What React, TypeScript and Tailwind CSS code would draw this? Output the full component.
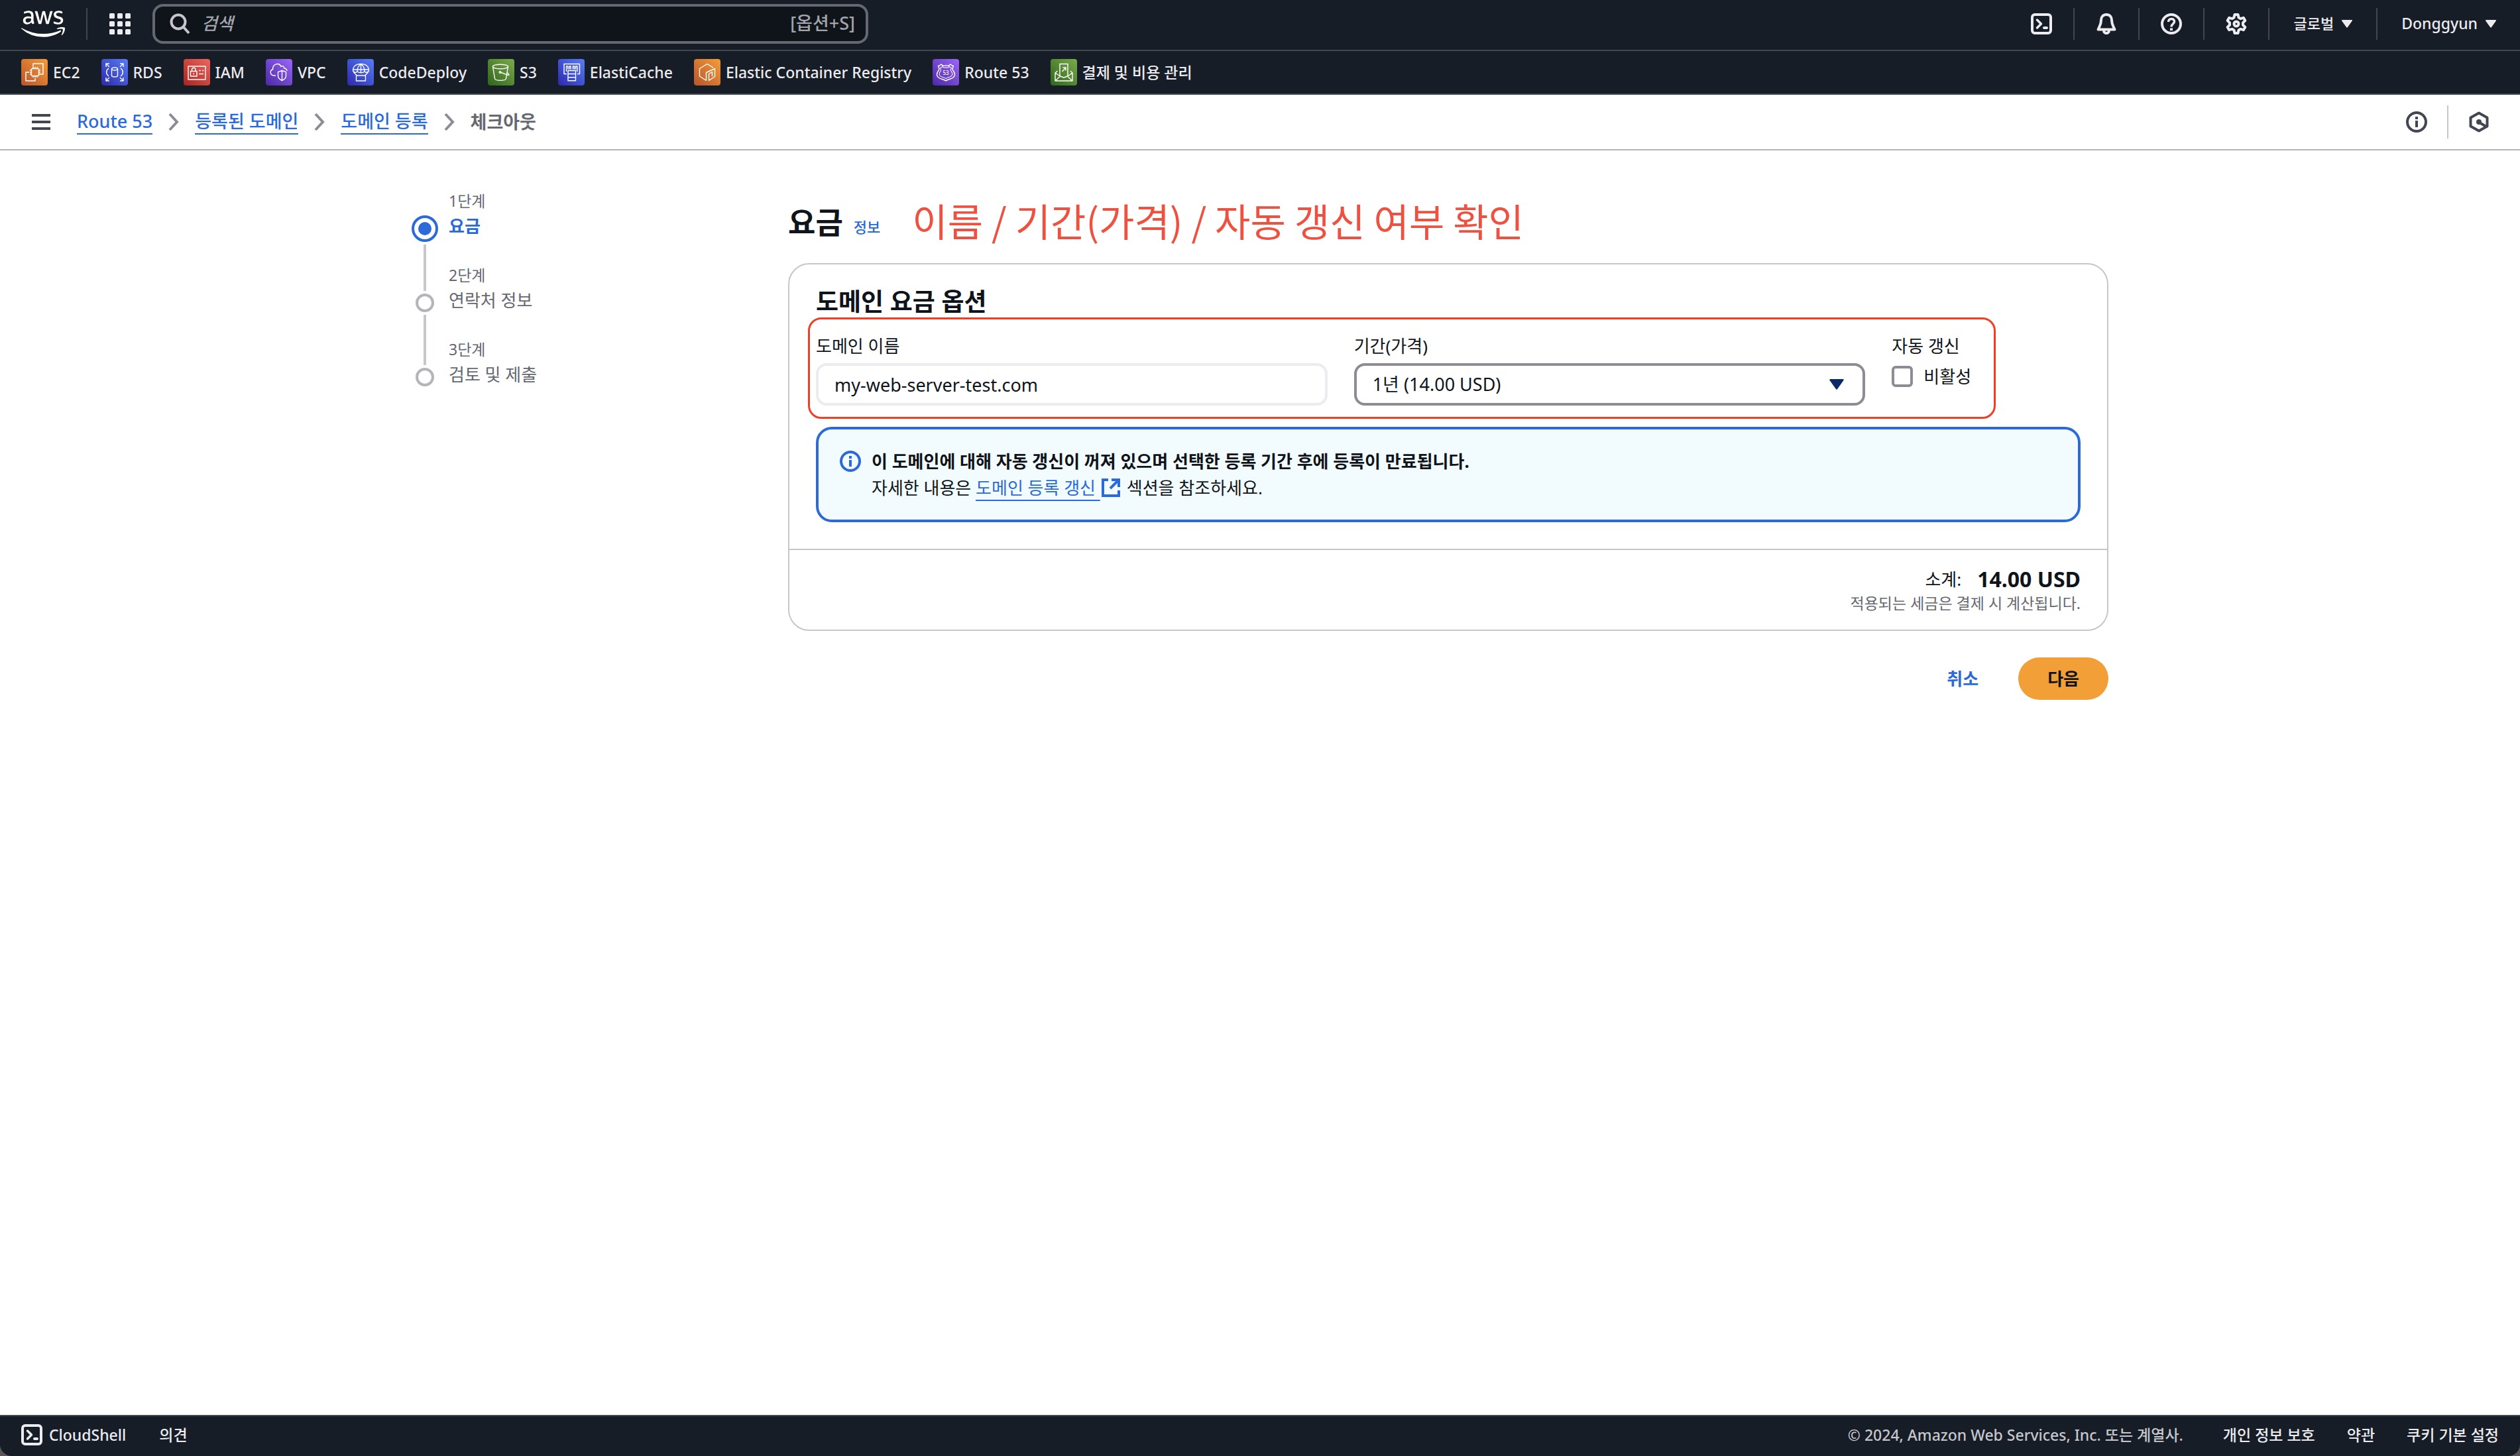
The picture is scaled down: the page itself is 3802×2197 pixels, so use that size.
import React from "react";
import { FaAws } from "react-icons/fa";

const services = [
  { name: "EC2", tile: "from-[#b8552b] to-[#f49c38]", icon: <Ec2Icon /> },
  { name: "RDS", tile: "from-[#2e27ad] to-[#5a7cf7]", icon: <RdsIcon /> },
  { name: "IAM", tile: "from-[#a92320] to-[#ee655e]", icon: <IamIcon /> },
  { name: "VPC", tile: "from-[#4d27a8] to-[#9c66f8]", icon: <VpcIcon /> },
  { name: "CodeDeploy", tile: "from-[#2e27ad] to-[#5a7cf7]", icon: <CodeDeployIcon /> },
  { name: "S3", tile: "from-[#2f661c] to-[#7bab4c]", icon: <S3Icon /> },
  { name: "ElastiCache", tile: "from-[#2e27ad] to-[#5a7cf7]", icon: <ElastiCacheIcon /> },
  { name: "Elastic Container Registry", tile: "from-[#b8552b] to-[#f49c38]", icon: <EcrIcon /> },
  { name: "Route 53", tile: "from-[#4d27a8] to-[#9c66f8]", icon: <Route53Icon /> },
  { name: "결제 및 비용 관리", tile: "from-[#2f661c] to-[#7bab4c]", icon: <BillingIcon /> },
];

const crumbs = ["Route 53", "등록된 도메인", "도메인 등록"];

const steps = [
  { label: "1단계", title: "요금" },
  { label: "2단계", title: "연락처 정보" },
  { label: "3단계", title: "검토 및 제출" },
];

function Tile({ children }: { children: React.ReactNode }) {
  return (
    <svg
      viewBox="0 0 40 40"
      className="size-10"
      fill="none"
      stroke="white"
      strokeWidth="1.4"
      strokeLinejoin="round"
      aria-hidden="true"
    >
      {children}
    </svg>
  );
}

function Ec2Icon() {
  return (
    <Tile>
      <path d="M18 12V7h15v16h-4M12 20H7v13h14v-4" />
      <rect x="15.5" y="14.5" width="11" height="11" rx="1" />
      <path d="M18 14.5V12M21 14.5V12M24 14.5V12M18 28v-2.5M21 28v-2.5M24 28v-2.5M15.5 17H13M15.5 20H13M15.5 23H13M29 17h-2.5M29 20h-2.5M29 23h-2.5" />
    </Tile>
  );
}

function RdsIcon() {
  return (
    <Tile>
      <path d="M7 12V7h5M7 7l5 5M28 7h5v5M33 7l-5 5M7 28v5h5M7 33l5-5M33 28v5h-5M33 33l-5-5" />
      <ellipse cx="20" cy="15" rx="4.5" ry="2" />
      <path d="M15.5 15v10c0 2.6 9 2.6 9 0V15M11 14c-4.5 3.5-4.5 8.5 0 12M29 14c4.5 3.5 4.5 8.5 0 12" />
    </Tile>
  );
}

function IamIcon() {
  return (
    <Tile>
      <rect x="7" y="11" width="26" height="20" />
      <rect x="10.5" y="18.5" width="9.5" height="7.5" />
      <path d="M12.5 18.5V16a2.7 2.7 0 0 1 5.4 0v2.5M15.2 21v2.5M23 17.5h3M28 17.5h2.5M23 22.5h7" />
    </Tile>
  );
}

function VpcIcon() {
  return (
    <Tile>
      <path d="M15 25h-3.5c-5-1-6-7.5-.8-9.5C10 7.5 20 4.5 23 11.5c2.5-2 5 0 4.7 2.5 2.5.3 4 1.800 4.3 4" />
      <path d="M24.500 17.500l6 2.200v6c0 3-2.500 5.200-6 6.800-3.500-1.600-6-3.800-6-6.800v-6zM24.500 17.500v15" />
    </Tile>
  );
}

function CodeDeployIcon() {
  return (
    <Tile>
      <path d="M8.5 18C8.5 11 13.5 7.5 20.5 7.5S32.500 11 32.500 18c-2 2.700-5 2.700-6.500 1-3 2.300-8 2.300-11 0-1.500 1.700-4.500 1.700-6.500-1zM15 19c0-5 2-9 5.500-11.500C24 10 26 14 26 19M20.500 7.500v13.200M9.500 20l5 5M31.500 20l-5 5M8.800 16h23.500" />
      <rect x="13.5" y="25" width="14" height="8" />
    </Tile>
  );
}

function S3Icon() {
  return (
    <Tile>
      <ellipse cx="19" cy="11.5" rx="11.5" ry="3.3" />
      <path d="M7.5 11.5l3 18c.3 3.8 16.7 3.8 17 0l3-18M19 20l11 4.2c2.5.8 3-.6-.8-3.7" />
      <circle cx="18.5" cy="20" r="1.3" />
    </Tile>
  );
}

function ElastiCacheIcon() {
  return (
    <Tile>
      <path d="M13 22.5H9v-15h23.5v15H29M12.500 19v-8h2.300v4.500M17 15.500V11h2v4.500M22.500 15.500V11h2v4.500M26.500 15.500V11h2.300v8" />
      <path d="M15 17.5h11.5v15.2H15zM15 22.5h11.5M15 27.7h11.5" />
    </Tile>
  );
}

function EcrIcon() {
  return (
    <Tile>
      <path d="M18.5 32.5L8.500 26V14.500l11.500-7 9 5.500M18.500 32.500v-12l13-6v12l-9 6v-10l5-3V26" />
    </Tile>
  );
}

function Route53Icon() {
  const shield =
    "M20 9.5c2.5 1.5 5 1 7-1.5 1.5 1.5 3 2.5 4.5 2.500-.5 2-1.500 3-1.500 4.500 0 2.500 3.500 4 3.500 8.500s-4.500 6-8 7c-2.500.7-4.500 1.500-5.500 2.500-1-1-3-1.800-5.500-2.500-3.500-1-8-2.500-8-7s3.500-6 3.500-8.500c0-1.500-1-2.500-1.500-4.500 1.500 0 3-1 4.500-2.500 2 2.500 4.500 3 7 1.500z";
  return (
    <Tile>
      <path d={shield} />
      <path d={shield} transform="translate(5.4 5.6) scale(.73)" />
      <text x="20" y="24" textAnchor="middle" fontSize="8" fill="white" stroke="none">
        53
      </text>
    </Tile>
  );
}

function BillingIcon() {
  return (
    <Tile>
      <path d="M10.5 18L7 21v12h26V21l-3-3M7 21l7.500 5 5.500 2 5.500-2 7.500-5M7 33l7.500-7M33 33l-7.500-7M14 25V7.500h12V25M17.500 19l5.500-6M18.500 13H23v4.500" />
    </Tile>
  );
}

function ShellIcon() {
  return (
    <svg viewBox="0 0 32 32" className="size-8" fill="none" stroke="currentColor" strokeWidth="4" aria-hidden="true">
      <rect x="2" y="2" width="28" height="28" rx="4" />
      <path d="M9.500 10l6 6-6 6" strokeLinejoin="round" strokeLinecap="round" strokeWidth="3.5" />
      <path d="M20 22h4" strokeLinecap="round" />
    </svg>
  );
}

function BellIcon() {
  return (
    <svg viewBox="0 0 32 32" className="size-8" fill="none" stroke="currentColor" strokeWidth="4" strokeLinejoin="round" aria-hidden="true">
      <path d="M16 2c-5 0-8 3.500-8 8.500C8 17 6 19 3.500 24.500h25C26 19 24 17 24 10.500 24 5.500 21 2 16 2z" />
      <path d="M12 26c0 5.500 8 5.500 8 0" />
    </svg>
  );
}

function HelpIcon() {
  return (
    <svg viewBox="0 0 32 32" className="size-8" fill="none" stroke="currentColor" aria-hidden="true">
      <circle cx="16" cy="16" r="14" strokeWidth="4" />
      <path d="M11.500 13c0-6 9-6 9-.5 0 3.500-4.500 3.500-4.500 8" strokeWidth="3.5" />
      <path d="M16 22.500V26" strokeWidth="4" />
    </svg>
  );
}

function GearIcon() {
  return (
    <svg viewBox="0 0 32 32" className="size-8" fill="none" stroke="currentColor" strokeWidth="4" strokeLinejoin="round" aria-hidden="true">
      <path d="M13.500 2h5l1 4.500 3 1.700 4.300-1.400 2.500 4.300-3.300 3.200v3.400l3.300 3.200-2.500 4.300-4.300-1.400-3 1.700-1 4.500h-5l-1-4.500-3-1.700-4.300 1.400-2.500-4.300L6 17.700v-3.400l-3.300-3.200 2.500-4.300 4.300 1.400 3-1.700z" />
      <circle cx="16" cy="16" r="3.5" />
    </svg>
  );
}

function InfoIcon() {
  return (
    <svg viewBox="0 0 32 32" className="size-8 shrink-0" fill="none" stroke="currentColor" strokeWidth="4" aria-hidden="true">
      <circle cx="16" cy="16" r="14" />
      <path d="M16 8v4M16 14v10" />
    </svg>
  );
}

function HexIcon() {
  return (
    <svg viewBox="0 0 32 32" className="size-8" fill="none" stroke="currentColor" strokeWidth="4" strokeLinejoin="round" aria-hidden="true">
      <path d="M16 2.500l12.500 7v13L16 29.500l-12.500-7v-13z" />
      <circle cx="16" cy="16" r="4" fill="currentColor" stroke="none" />
      <path d="M17 17l10 6" />
    </svg>
  );
}

function ExternalIcon() {
  return (
    <svg viewBox="0 0 30 28" className="mr-2 inline h-7 w-8 align-[-4px]" fill="none" stroke="currentColor" strokeWidth="4" aria-hidden="true">
      <path d="M11 2H3v24h24v-8M16 2h11v11M27 2L14 15" />
    </svg>
  );
}

function ChevronIcon() {
  return (
    <svg viewBox="0 0 16 28" className="h-7 w-4" fill="none" stroke="#8c8c94" strokeWidth="4" aria-hidden="true">
      <path d="M2 2l11 12L2 26" />
    </svg>
  );
}

function Caret() {
  return (
    <svg viewBox="0 0 16 12" className="h-3 w-4" fill="currentColor" aria-hidden="true">
      <path d="M1 0h14q1.500 0 .8 1.500L9 11q-1 1.500-2 0L.2 1.500Q-.5 0 1 0z" />
    </svg>
  );
}

const Divider = () => <div className="h-12 w-[2px] bg-[#424650]" />;

const TopNav = () => {
  return (
    <header className="bg-[#161d26] text-[#ebebf0] font-medium">
      <div className="flex h-[77px] items-center justify-between border-b-2 border-[#424650] pb-1">
        <div className="flex grow items-center">
          <a href="#" aria-label="AWS" className="px-8 text-white">
            <FaAws className="h-[66px] w-[66px]" />
          </a>
          <Divider />
          <button aria-label="서비스" className="px-[33px]">
            <svg viewBox="0 0 32 32" className="size-8" fill="currentColor" aria-hidden="true">
              {[0, 12, 24].map((y) =>
                [0, 12, 24].map((x) => <rect key={`${x}-${y}`} x={x} y={y} width="8" height="8" rx="1.5" />)
              )}
            </svg>
          </button>
          <div className="flex h-[60px] w-full max-w-[1080px] items-center rounded-2xl border-4 border-[#656871] bg-[#0f141a] pl-[22px] pr-4">
            <svg viewBox="0 0 32 32" className="size-8" fill="none" stroke="#c6c6cd" strokeWidth="4" aria-hidden="true">
              <circle cx="13" cy="13" r="10.5" />
              <path d="M20 20l9 10" />
            </svg>
            <input
              aria-label="검색"
              placeholder="검색"
              className="ml-4 min-w-0 grow bg-transparent text-[26px] italic outline-none placeholder:text-[#a4a4ad]"
            />
            <span className="text-[27px] text-[#a4a4ad]">[옵션+S]</span>
          </div>
        </div>
        <div className="flex items-center text-[23px]">
          <button aria-label="CloudShell" className="px-8"><ShellIcon /></button>
          <Divider />
          <button aria-label="알림" className="px-8"><BellIcon /></button>
          <Divider />
          <button aria-label="도움말" className="px-8"><HelpIcon /></button>
          <Divider />
          <button aria-label="설정" className="px-8"><GearIcon /></button>
          <Divider />
          <button className="flex items-center gap-3 px-9 text-[22px]">
            글로벌 <Caret />
          </button>
          <Divider />
          <button className="flex items-center gap-3 px-9">
            Donggyun <Caret />
          </button>
        </div>
      </div>
      <nav className="flex h-[66px] items-center gap-8 border-b-2 border-[#424650] px-8 text-[23px]">
        {services.map((s) => (
          <a key={s.name} href="#" className="flex items-center gap-2">
            <span className={`size-10 rounded-sm bg-linear-to-tr ${s.tile}`}>{s.icon}</span>
            {s.name}
          </a>
        ))}
      </nav>
    </header>
  );
};

const Breadcrumbs = () => {
  return (
    <div className="flex h-[84px] items-center justify-between border-b-2 border-[#b4b4bb] pl-12 pr-[46px] text-[#424650]">
      <div className="flex items-center">
        <button aria-label="메뉴">
          <svg viewBox="0 0 28 24" className="h-6 w-7" fill="currentColor" aria-hidden="true">
            <path d="M0 0h28v4H0zM0 10h28v4H0zM0 20h28v4H0z" />
          </svg>
        </button>
        <nav className="ml-10 flex items-center gap-6 text-[27px] leading-9">
          {crumbs.map((c) => (
            <React.Fragment key={c}>
              <a href="#" className="border-b-2 border-[#2b6ad8] font-medium text-[#2b6ad8]">
                {c}
              </a>
              <ChevronIcon />
            </React.Fragment>
          ))}
          <span className="font-bold text-[#656871]">체크아웃</span>
        </nav>
      </div>
      <div className="flex items-center gap-[30px]">
        <button aria-label="정보"><InfoIcon /></button>
        <div className="h-[50px] w-[2px] bg-[#c6c6cd]" />
        <button aria-label="진단"><HexIcon /></button>
      </div>
    </div>
  );
};

const Steps = () => {
  return (
    <ol className="w-[568px] shrink-0 text-[#656871]">
      {steps.map((s, i) => (
        <li key={s.label} className="flex h-28 gap-4">
          <div className="flex w-10 flex-col items-center gap-1">
            {i === 0 ? (
              <>
                <div className="h-[34px]" />
                <div className="flex size-10 shrink-0 items-center justify-center rounded-full border-4 border-[#2b6ad8]">
                  <div className="size-5 rounded-full bg-[#2b6ad8]" />
                </div>
              </>
            ) : (
              <>
                <div className="h-10 w-1 bg-[#c6c6cd]" />
                <div className="size-7 shrink-0 rounded-full border-4 border-[#b4b4bb]" />
              </>
            )}
            {i < steps.length - 1 && <div className="w-1 grow bg-[#c6c6cd]" />}
          </div>
          <div className="flex flex-col gap-[2px]">
            <span className="text-[23px] leading-8">{s.label}</span>
            {i === 0 ? (
              <a href="#" className="text-[26px] font-bold leading-10 text-[#2b6ad8]">{s.title}</a>
            ) : (
              <span className="text-[26px] leading-10">{s.title}</span>
            )}
          </div>
        </li>
      ))}
    </ol>
  );
};

const PricingCard = () => {
  return (
    <section className="rounded-[32px] border-2 border-[#c6c6cd]">
      <div className="px-10 pb-10 pt-8">
        <h2 className="text-[37px] font-bold leading-[48px]">도메인 요금 옵션</h2>
        <div className="relative grid grid-cols-12 gap-x-10 pt-[25px]">
          <div className="col-span-5 flex flex-col gap-2">
            <label htmlFor="domain" className="text-[26px] leading-9">도메인 이름</label>
            <input
              id="domain"
              readOnly
              value="my-web-server-test.com"
              className="h-16 rounded-2xl border-4 border-[#ebebf0] px-6 text-[27px]"
            />
          </div>
          <div className="col-span-5 flex flex-col gap-2">
            <label htmlFor="period" className="text-[26px] leading-9">기간(가격)</label>
            <div className="relative">
              <select
                id="period"
                className="h-16 w-full appearance-none rounded-2xl border-4 border-[#8c8c94] bg-white px-6 text-[27px]"
              >
                <option>1년 (14.00 USD)</option>
              </select>
              <svg viewBox="0 0 16 12" className="pointer-events-none absolute right-8 top-6 h-4 w-[22px]" fill="#0b2b66" aria-hidden="true">
                <path d="M1 0h14q1.500 0 .8 1.500L9 11q-1 1.500-2 0L.2 1.500Q-.5 0 1 0z" />
              </svg>
            </div>
          </div>
          <div className="col-span-2 flex flex-col gap-2 text-[26px]">
            <span className="leading-9">자동 갱신</span>
            <label className="flex items-center gap-4 leading-10">
              <input type="checkbox" className="size-8 appearance-none rounded-md border-4 border-[#8c8c94]" />
              비활성
            </label>
          </div>
          <div className="pointer-events-none absolute -bottom-5 -left-3 right-32 top-0 rounded-[20px] border-3 border-[#ed4127]" />
        </div>
        <div className="mt-8 flex gap-4 rounded-3xl border-4 border-[#2b6ad8] bg-[#f2fbfe] px-8 py-7 text-[26px] leading-10">
          <div className="pt-1 text-[#2b6ad8]">
            <InfoIcon />
          </div>
          <div>
            <p className="font-bold">
              이 도메인에 대해 자동 갱신이 꺼져 있으며 선택한 등록 기간 후에 등록이 만료됩니다.
            </p>
            <p>
              자세한 내용은{" "}
              <a href="#" className="text-[#2b6ad8]">
                <span className="whitespace-pre underline decoration-2 underline-offset-8">도메인 등록 갱신 </span>
                <ExternalIcon />
              </a>
              섹션을 참조하세요.
            </p>
          </div>
        </div>
      </div>
      <div className="border-t-2 border-[#c6c6cd] px-10 py-6 text-right">
        <p className="flex h-10 items-center justify-end gap-6 text-[26px]">
          소계: <strong className="text-[32px]">14.00 USD</strong>
        </p>
        <p className="text-[23px] leading-8 text-[#656871]">적용되는 세금은 결제 시 계산됩니다.</p>
      </div>
    </section>
  );
};

const Footer = () => {
  return (
    <div className="bg-[#5b5655]">
      <footer className="flex h-[62px] items-center justify-between rounded-b-[18px] border-t-2 border-[#424650] bg-[#161d26] px-8 pb-1 text-[23px] font-medium text-[#ebebf0]">
        <div className="flex items-center gap-[50px]">
          <button className="flex items-center gap-[10px]">
            <ShellIcon />
            CloudShell
          </button>
          <a href="#">의견</a>
        </div>
        <div className="flex items-center gap-12">
          <span className="mr-3 text-[#c6c6cd]">© 2024, Amazon Web Services, Inc. 또는 계열사.</span>
          <a href="#">개인 정보 보호</a>
          <a href="#">약관</a>
          <a href="#">쿠키 기본 설정</a>
        </div>
      </footer>
    </div>
  );
};

export default function App() {
  return (
    <div className="flex min-h-screen flex-col bg-white font-['Noto_Sans','Noto_Sans_CJK_KR',sans-serif] text-[#0f141a]">
      <TopNav />
      <Breadcrumbs />
      <div className="mx-auto flex w-full max-w-[2560px] grow pt-[60px]">
        <Steps />
        <main className="min-w-0 grow">
          <div className="mb-3 flex h-[98px] items-center">
            <h1 className="text-[45px] font-bold">요금</h1>
            <a href="#" className="ml-4 mt-3 text-[22px] font-medium text-[#2b6ad8]">정보</a>
            <p className="ml-12 pb-2 font-['Noto_Sans_CJK_KR',sans-serif] text-[58px] leading-none text-[#ee5140]">
              이름 / 기간(가격) / 자동 갱신 여부 확인
            </p>
          </div>
          <PricingCard />
          <div className="mt-10 flex justify-end gap-5 text-[26px] font-bold">
            <button className="h-16 px-10 text-[#2b6ad8]">취소</button>
            <button className="h-16 rounded-full bg-[#f29f38] px-11">다음</button>
          </div>
        </main>
      </div>
      <Footer />
    </div>
  );
}
